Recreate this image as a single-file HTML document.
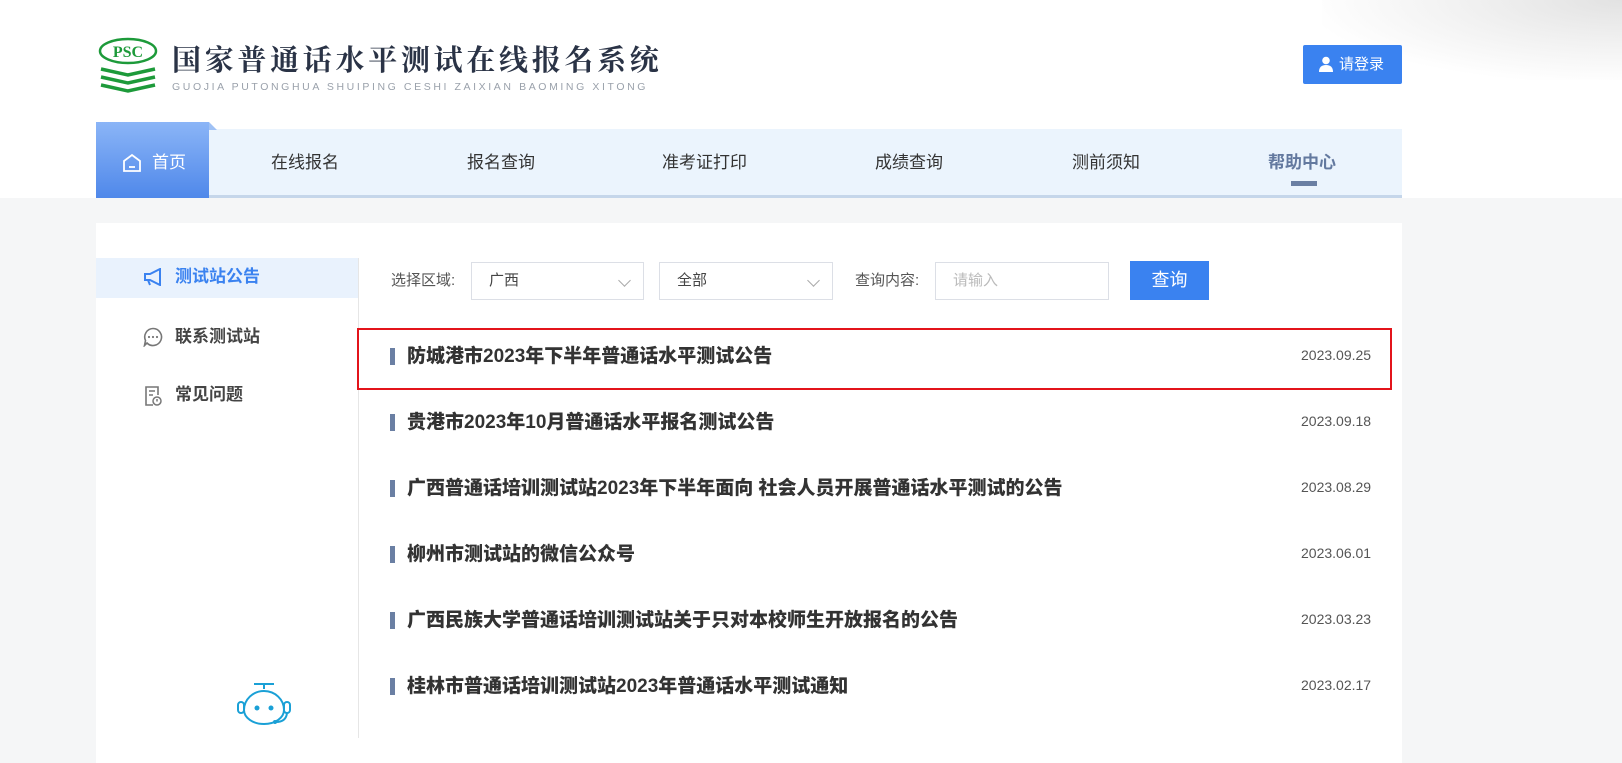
<!DOCTYPE html>
<html><head><meta charset="utf-8">
<style>
*{margin:0;padding:0;box-sizing:border-box}
body{width:1622px;height:759px;overflow:hidden;font-family:"Liberation Sans","Noto Sans CJK SC",sans-serif;background:#f5f6f7;position:relative}
.top{position:absolute;left:0;top:0;width:1622px;height:198px;background:#fff}
.shade{position:absolute;right:0;top:0;width:300px;height:80px;background:radial-gradient(ellipse at 100% 0%,#e2e2e2 0%,#f2f2f2 40%,rgba(255,255,255,0) 75%)}
.title{position:absolute;left:172px;top:42px;font-size:29px;line-height:34px;color:#2a3346;letter-spacing:3.7px;font-weight:bold;font-family:"Noto Serif CJK SC","Noto Sans CJK SC",serif;white-space:nowrap}
.sub{position:absolute;left:172px;top:82px;font-size:10.5px;line-height:11px;color:#9aa1ab;letter-spacing:2.6px;white-space:nowrap}
.login{position:absolute;left:1303px;top:45px;width:99px;height:39px;background:#3a82f0;border-radius:2px;color:#fff;font-size:15px;line-height:39px;padding-left:36px}
.nav{position:absolute;left:96px;top:129px;width:1306px;height:69px;background:#ebf4fd;border-bottom:3px solid #c5d6ea}
.nav span{position:absolute;top:23px;font-size:17px;color:#333;line-height:22px}
.home{position:absolute;left:96px;top:122px;width:113px;height:76px;background:linear-gradient(#8bb5f7,#4f88ea)}
.home:after{content:"";position:absolute;right:-8px;top:0;border-left:8px solid #9fc1f5;border-top:8px solid transparent}
.card{position:absolute;left:96px;top:223px;width:1306px;height:540px;background:#fff}
.side{position:absolute;left:358px;top:258px;width:1px;height:480px;background:#e6e6e6}
.sel{position:absolute;left:96px;top:258px;width:262px;height:40px;background:#e9f2fd}
.si{position:absolute;left:175px;font-size:17px;font-weight:bold;color:#444;line-height:22px}
.box{position:absolute;top:262px;height:38px;border:1px solid #dcdfe6;background:#fff;font-size:15px;color:#444;line-height:36px;padding-left:17px}
.lab{position:absolute;top:271px;font-size:15px;color:#555;line-height:20px}
.btn{position:absolute;left:1130px;top:261px;width:79px;height:39px;background:#3a82f0;color:#fff;font-size:18px;line-height:39px;text-align:center}
.row{position:absolute;left:390px;font-size:19px;font-weight:bold;color:#333;line-height:25px}
.row:before{content:"";position:absolute;left:0;top:4px;width:5px;height:17px;background:#6a7fa3}
.row b{padding-left:17px}
.dt{position:absolute;left:1301px;font-size:14px;color:#555;line-height:18px}
.red{position:absolute;left:357px;top:328px;width:1035px;height:62px;border:2px solid #e3141b}
.chev{position:absolute;top:276px;width:9px;height:9px;border-right:1px solid #aaa;border-bottom:1px solid #aaa;transform:rotate(45deg)}
</style></head><body>
<div class="top"></div><div class="shade"></div>
<svg style="position:absolute;left:97px;top:37px" width="62" height="58" viewBox="0 0 62 58">
<ellipse cx="31" cy="14" rx="28" ry="12" fill="none" stroke="#1d9a3a" stroke-width="2.5"/>
<text x="31" y="20" text-anchor="middle" font-family="Liberation Serif" font-weight="bold" font-size="16" fill="#1d9a3a">PSC</text>
<g stroke="#1d9a3a" stroke-width="3.5" fill="none"><path d="M4 32 L31 38 L58 32"/><path d="M4 40 L31 46 L58 40"/><path d="M4 48 L31 54 L58 48"/></g>
</svg>
<div class="title">国家普通话水平测试在线报名系统</div>
<div class="sub">GUOJIA PUTONGHUA SHUIPING CESHI ZAIXIAN BAOMING XITONG</div>
<div class="login"><svg style="position:absolute;left:15px;top:11px" width="16" height="16" viewBox="0 0 16 16"><circle cx="8" cy="4.5" r="3.8" fill="#fff"/><path d="M1 16 Q1 9 8 9 Q15 9 15 16Z" fill="#fff"/></svg>请登录</div>
<div class="nav">
<span style="left:175px">在线报名</span><span style="left:371px">报名查询</span><span style="left:566px">准考证打印</span><span style="left:779px">成绩查询</span><span style="left:976px">测前须知</span><span style="left:1172px;color:#63799f;font-weight:bold">帮助中心</span>
<div style="position:absolute;left:1195px;top:52px;width:26px;height:5px;background:#6a7fa3"></div>
</div>
<div class="home"><svg style="position:absolute;left:26px;top:31px" width="20" height="20" viewBox="0 0 20 20"><path d="M2 8 L10 2 L18 8 V18 H2Z" fill="none" stroke="#fff" stroke-width="1.8"/><path d="M7 14 H13" stroke="#fff" stroke-width="1.8"/></svg><span style="position:absolute;left:56px;top:30px;color:#fff;font-size:17px;line-height:22px">首页</span></div>
<div class="card"></div>
<div class="sel"></div><div class="side"></div>
<svg style="position:absolute;left:143px;top:268px" width="20" height="18" viewBox="0 0 20 18"><path d="M2 6 H7 L17 1 V17 L7 12 H2Z M5 12 L7 17" fill="none" stroke="#3a82f0" stroke-width="2"/></svg>
<div class="si" style="top:266px;color:#3a82f0">测试站公告</div>
<svg style="position:absolute;left:143px;top:327px" width="20" height="20" viewBox="0 0 20 20"><path d="M10 1.5 A8.5 8.5 0 1 1 4 16 L1.5 18.5 L2.5 13.5 A8.5 8.5 0 0 1 10 1.5Z" fill="none" stroke="#777" stroke-width="1.6"/><circle cx="6" cy="10" r="1.1" fill="#777"/><circle cx="10" cy="10" r="1.1" fill="#777"/><circle cx="14" cy="10" r="1.1" fill="#777"/></svg>
<div class="si" style="top:326px">联系测试站</div>
<svg style="position:absolute;left:144px;top:386px" width="18" height="20" viewBox="0 0 18 20"><path d="M9 19 H2 V1 H14 V9 M5 5 H11 M5 9 H9" fill="none" stroke="#777" stroke-width="1.6"/><circle cx="13" cy="15" r="4" fill="none" stroke="#777" stroke-width="1.5"/><path d="M13 13 V15.5" stroke="#777" stroke-width="1.5"/></svg>
<div class="si" style="top:384px">常见问题</div>
<svg style="position:absolute;left:236px;top:680px" width="56" height="48" viewBox="0 0 56 48"><g fill="none" stroke="#1aa0d6" stroke-width="2"><path d="M18 4 H38 M28 4 V9"/><path d="M8 30 A20 19 0 0 1 48 30 A20 14 0 0 1 8 30Z"/><rect x="2" y="22" width="6" height="11" rx="3"/><rect x="48" y="22" width="6" height="11" rx="3"/><path d="M51 33 Q50 42 40 42"/></g><circle cx="21" cy="28" r="2.5" fill="#1aa0d6"/><circle cx="35" cy="28" r="2.5" fill="#1aa0d6"/><circle cx="39" cy="42" r="2" fill="#1aa0d6"/></svg>
<div class="lab" style="left:391px">选择区域:</div>
<div class="box" style="left:471px;width:173px">广西</div><div class="chev" style="left:620px"></div>
<div class="box" style="left:659px;width:174px">全部</div><div class="chev" style="left:809px"></div>
<div class="lab" style="left:855px">查询内容:</div>
<div class="box" style="left:935px;width:174px;color:#bbb">请输入</div>
<div class="btn">查询</div>
<div class="red"></div>
<div class="row" style="top:344px"><b>防城港市2023年下半年普通话水平测试公告</b></div><div class="dt" style="top:346px">2023.09.25</div>
<div class="row" style="top:410px"><b>贵港市2023年10月普通话水平报名测试公告</b></div><div class="dt" style="top:412px">2023.09.18</div>
<div class="row" style="top:476px"><b>广西普通话培训测试站2023年下半年面向 社会人员开展普通话水平测试的公告</b></div><div class="dt" style="top:478px">2023.08.29</div>
<div class="row" style="top:542px"><b>柳州市测试站的微信公众号</b></div><div class="dt" style="top:544px">2023.06.01</div>
<div class="row" style="top:608px"><b>广西民族大学普通话培训测试站关于只对本校师生开放报名的公告</b></div><div class="dt" style="top:610px">2023.03.23</div>
<div class="row" style="top:674px"><b>桂林市普通话培训测试站2023年普通话水平测试通知</b></div><div class="dt" style="top:676px">2023.02.17</div>
</body></html>
